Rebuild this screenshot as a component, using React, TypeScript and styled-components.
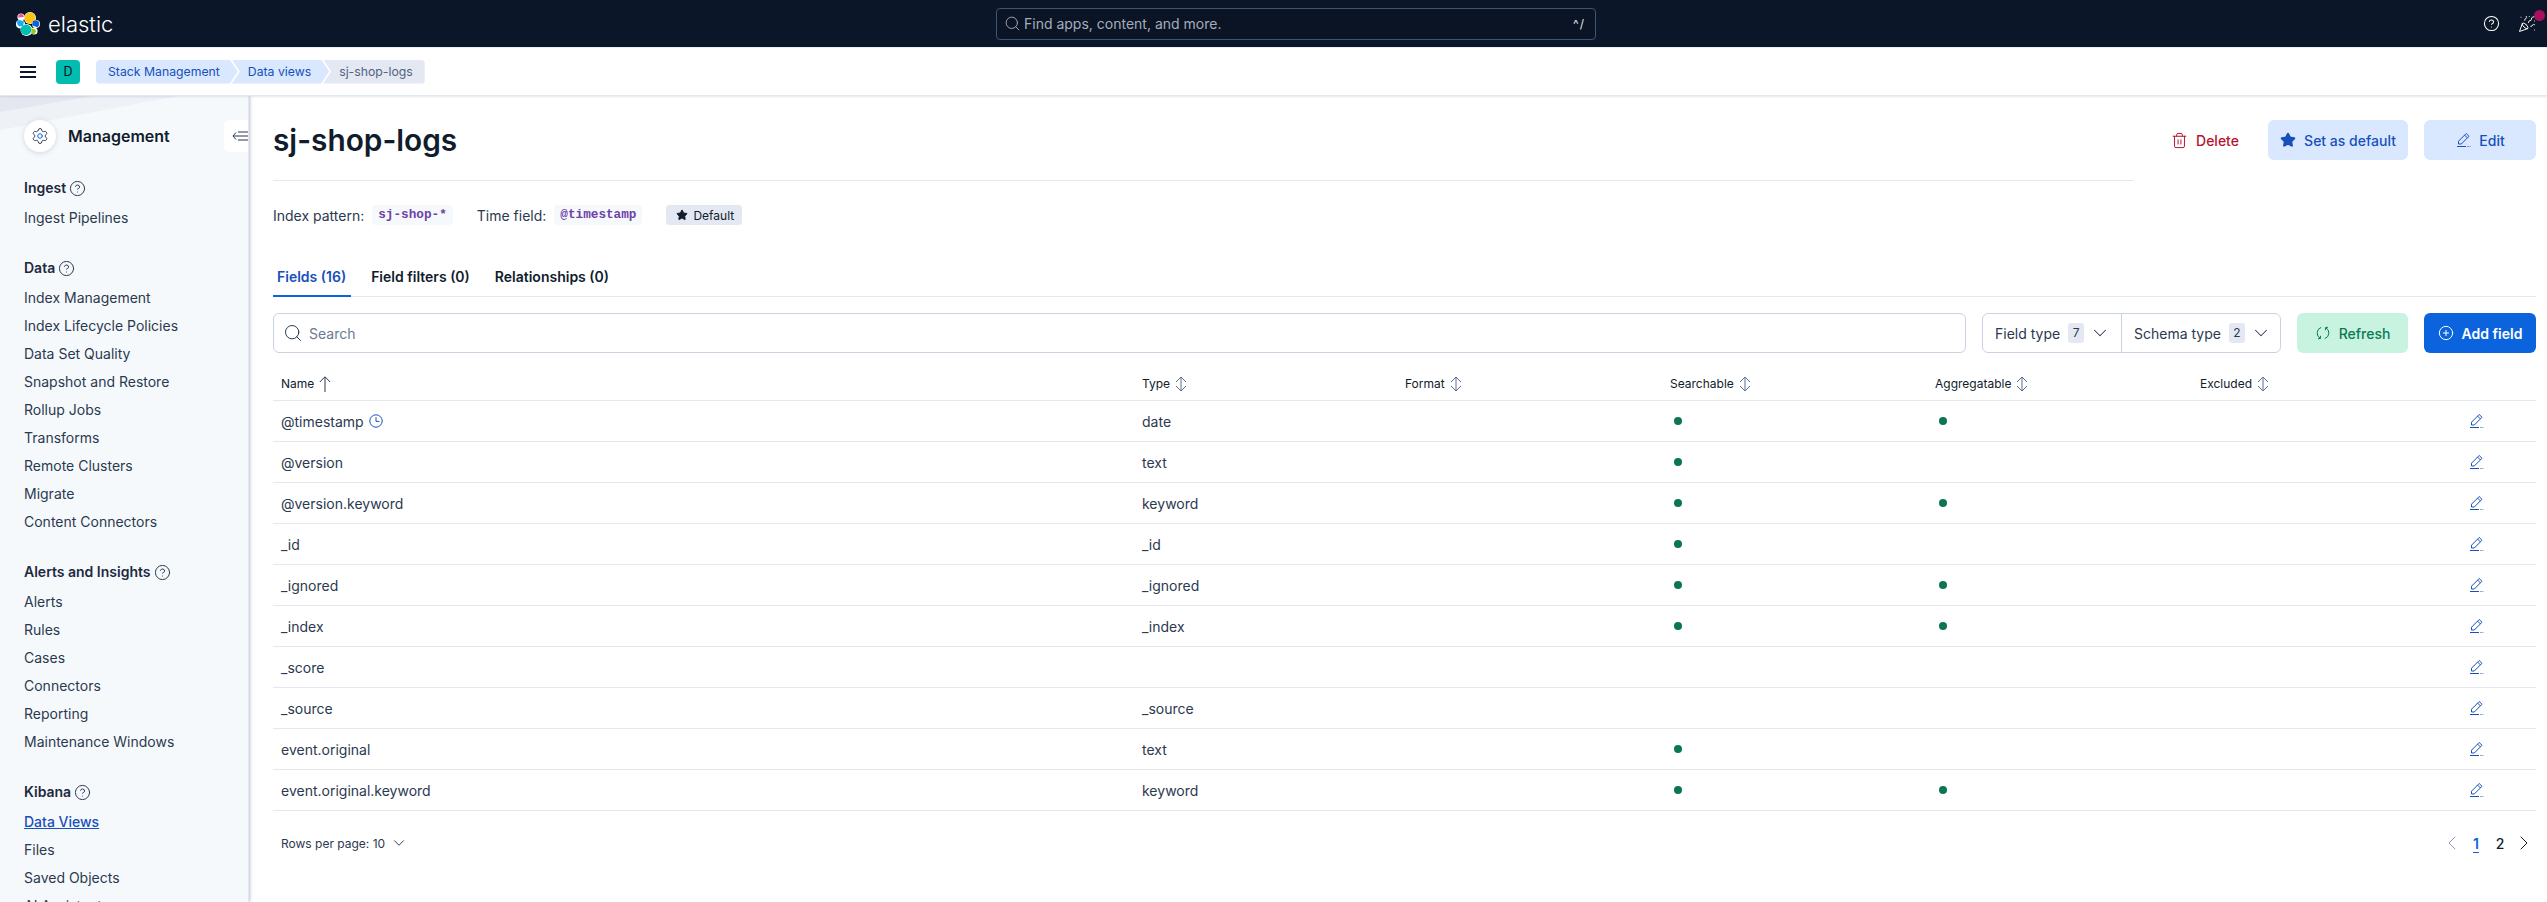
import React from "react";
import styled, { createGlobalStyle } from "styled-components";
import { ChevronDown, ChevronLeft, ChevronRight, CircleHelp, CirclePlus, PartyPopper, Search, Settings, Star, Trash2 } from "lucide-react";

const Global = createGlobalStyle`
  html, body { margin: 0; padding: 0; height: 902px; overflow: hidden; background: #fff; }
  body { font-family: Inter, "Noto Sans", sans-serif; font-size: 14px; color: #2b394f; }
  * { box-sizing: border-box; }
`;

const Page = styled.div`height: 902px; display: flex; flex-direction: column; overflow: hidden;`;
const TopBar = styled.header`
  height: 48px; flex: none; background: #0b1628; border-bottom: 1px solid #eef1f7;
  display: grid; grid-template-columns: 996px 600px 1fr; align-items: center;
`;
const Brand = styled.div`display: flex; align-items: center; gap: 8px; padding-left: 16px;`;
const BrandName = styled.span`color: #fff; font-size: 22px; font-weight: 300; line-height: 24px;`;
const GlobalSearch = styled.div`
  height: 32px; border: 1px solid #3f5373; border-radius: 4px; background: #0a1424;
  display: flex; align-items: center; padding: 0 10px 0 7px; gap: 3px; color: #a3adbc; font-size: 14px;
`;
const Grow = styled.span`flex: 1;`;
const Kbd = styled.span`color: #dfe5ef; font-size: 12px; letter-spacing: 1px;`;
const TopIcons = styled.div`display: flex; justify-content: flex-end; align-items: center; gap: 18px; padding-right: 11px; color: #fff;`;
const NewsWrap = styled.span`position: relative; display: flex;`;
const NewsDot = styled.span`position: absolute; top: -5px; right: -9px; width: 11px; height: 11px; border-radius: 50%; background: #a5115f;`;

const SubBar = styled.div`
  height: 48px; flex: none; display: flex; align-items: center; background: #fff; position: relative; z-index: 3;
  padding-left: 20px; border-bottom: 1px solid #e3e8f2; box-shadow: 0 1px 2px rgba(120,135,170,.2);
`;
const Burger = styled.div`
  width: 16px; height: 12px; margin-right: 20px;
  border-top: 2px solid #0b1628; border-bottom: 2px solid #0b1628; position: relative;
  &::after { content: ""; position: absolute; left: 0; right: 0; top: 3px; height: 2px; background: #0b1628; }
`;
const Avatar = styled.div`
  width: 24px; height: 24px; border-radius: 4px; background: #02bcb0; color: #07101f; font-size: 12.5px;
  display: flex; align-items: center; justify-content: center; margin-right: 16px;
`;
const Crumbs = styled.nav`display: flex;`;
const Crumb = styled.a<{ $kind: "first" | "mid" | "last" }>`
  height: 24px; display: flex; align-items: center; font-size: 12.25px; line-height: 24px;
  color: ${p => (p.$kind === "last" ? "#516381" : "#1750ba")};
  background: ${p => (p.$kind === "last" ? "#e3e8f2" : "#d9e8ff")};
  padding: ${p => (p.$kind === "first" ? "0 18px 0 12px" : p.$kind === "mid" ? "0 18px 0 16px" : "0 12px 0 16px")};
  margin-left: ${p => (p.$kind === "first" ? "0" : "-6px")};
  border-radius: ${p => (p.$kind === "first" ? "4px 0 0 4px" : p.$kind === "last" ? "0 4px 4px 0" : "0")};
  clip-path: ${p =>
    p.$kind === "first"
      ? "polygon(0 0, calc(100% - 8px) 0, 100% 50%, calc(100% - 8px) 100%, 0 100%)"
      : p.$kind === "mid"
        ? "polygon(0 0, calc(100% - 8px) 0, 100% 50%, calc(100% - 8px) 100%, 0 100%, 8px 50%)"
        : "polygon(0 0, 100% 0, 100% 100%, 0 100%, 8px 50%)"};
`;

const Body = styled.div`flex: 1; display: flex; min-height: 0;`;
const Side = styled.aside`
  width: 249px; flex: none; background: #f6f9fc; padding: 24px 0 0 24px; position: relative; overflow: hidden;
  border-right: 1px solid #e3e8f2; box-shadow: 1px 0 3px rgba(120,135,170,.5); z-index: 2;
  &::before { content: ""; position: absolute; left: 0; top: 0; width: 178px; height: 34px; background: #eef1f6; clip-path: polygon(0 0, 100% 0, 0 100%); }
  &::after { content: ""; position: absolute; left: 0; top: 0; width: 93px; height: 16px; background: #e4e7f0; clip-path: polygon(0 0, 100% 0, 0 100%); }
`;
const SideHead = styled.div`height: 32px; display: flex; align-items: center; gap: 12px; margin-bottom: 26px; position: relative; z-index: 1;`;
const GearCircle = styled.span`
  width: 32px; height: 32px; border-radius: 50%; background: #fff; display: flex; align-items: center; justify-content: center;
  box-shadow: 0 1px 5px rgba(120,135,170,.3); color: #2b394f;
  & circle { stroke: #0b64dd; }
`;
const SideTitle = styled.div`font-size: 16px; font-weight: 600; color: #111c2c;`;
const Collapse = styled.span`
  position: absolute; right: 0; top: 0; width: 24px; height: 32px; background: #fff; border-radius: 6px 0 0 6px;
  display: flex; align-items: center; justify-content: flex-start; padding-left: 8px; color: #2b394f;
`;
const Group = styled.section`margin-bottom: 26px;`;
const GroupTitle = styled.div`height: 20px; margin-bottom: 6px; display: flex; align-items: center; gap: 3px; font-weight: 600; color: #1d2a3e; line-height: 20px;`;
const SideItem = styled.a<{ $active?: boolean }>`
  display: block; height: 28px; line-height: 28px;
  color: ${p => (p.$active ? "#1750ba" : "#2b394f")};
  font-weight: ${p => (p.$active ? 500 : 400)};
  text-decoration: ${p => (p.$active ? "underline" : "none")};
`;

const Main = styled.main`flex: 1; min-width: 0; padding: 0 11px 0 24px; background: #fff;`;
const Header = styled.div`display: flex; align-items: flex-start;`;
const TitleBlock = styled.div`flex: 1; margin-right: 24px; padding: 24px 0 20px; border-bottom: 1px solid #e3e8f2;`;
const Title = styled.h1`margin: 0; font-size: 29.8px; line-height: 40px; font-weight: 600; color: #111c2c;`;
const Actions = styled.div`display: flex; gap: 16px; padding-top: 24px;`;
const Btn = styled.button<{ $tone: "plain" | "soft" | "green" | "solid"; $w: number }>`
  height: 40px; width: ${p => p.$w}px; border: 0; border-radius: 6px; display: flex; align-items: center; justify-content: center; gap: 8px;
  font: 500 14px Inter, sans-serif; padding: 0; flex: none;
  background: ${p => ({ plain: "transparent", soft: "#d9e8ff", green: "#c8f3e1", solid: "#0b64dd" })[p.$tone]};
  color: ${p => ({ plain: "#b4152e", soft: "#1750ba", green: "#0b7a53", solid: "#fff" })[p.$tone]};
  font-weight: ${p => (p.$tone === "solid" ? 600 : 500)};
`;
const Info = styled.div`display: flex; align-items: center; height: 20px; margin-top: 24px; color: #2b394f;`;
const Label = styled.span`margin-right: 8px;`;
const Code = styled.code`
  height: 20px; padding: 0 6px; border-radius: 4px; background: #f6f9fc; color: #6f3fa8; margin-right: 24px;
  font: 700 12.7px/20px "Liberation Mono", monospace;
`;
const DefaultBadge = styled.span`
  height: 20px; padding: 0 8px 0 10px; border-radius: 3px; background: #e3e8f2; color: #111c2c; font-size: 12px;
  display: flex; align-items: center; gap: 5px;
`;
const Tabs = styled.div`display: flex; gap: 16px; height: 40px; margin-top: 32px; border-bottom: 1px solid #e3e8f2;`;
const Tab = styled.div<{ $on?: boolean }>`
  padding: 0 5px 0 4px; height: 40px; line-height: 39px; font-weight: 600; color: ${p => (p.$on ? "#1750ba" : "#111c2c")};
  border-bottom: 2px solid ${p => (p.$on ? "#0b64dd" : "transparent")};
`;
const Tools = styled.div`display: flex; gap: 16px; height: 40px; margin-top: 16px;`;
const SearchBox = styled.div`
  flex: 1; border: 1px solid #cad3e2; border-radius: 6px; display: flex; align-items: center; gap: 6px; padding-left: 9px; color: #6a7a93;
`;
const FilterGroup = styled.div`display: flex; width: 299px; border: 1px solid #cad3e2; border-radius: 6px;`;
const Filter = styled.div<{ $w: number; $line?: boolean }>`
  width: ${p => p.$w}px; display: flex; align-items: center; padding-left: 12px; color: #2b394f; white-space: nowrap;
  border-right: ${p => (p.$line ? "1px solid #cad3e2" : "0")};
`;
const Count = styled.span`
  width: 16px; height: 20px; border-radius: 3px; background: #e3e8f2; font-size: 12px; line-height: 20px; text-align: center; margin: 0 5px 0 8px; color: #2b394f;
`;
const Columns = "861px 263px 265px 265px 265px 265px 1fr";
const HeadRow = styled.div`
  display: grid; grid-template-columns: ${Columns}; height: 48px; border-bottom: 1px solid #e3e8f2; align-items: center; padding-top: 14px;
`;
const HeadCell = styled.div`display: flex; align-items: center; gap: 5px; padding-left: 8px; font-size: 12px; font-weight: 400; color: #111c2c;`;
const Row = styled.div`
  display: grid; grid-template-columns: ${Columns}; height: 41px; border-bottom: 1px solid #e3e8f2; align-items: center;
`;
const Cell = styled.div`display: flex; align-items: center; gap: 5px; padding-left: 8px; color: #2b394f;`;
const Dot = styled.span`width: 8px; height: 8px; border-radius: 50%; background: #0a7750; margin-left: 4px;`;
const EditCell = styled.div`padding-left: 11px; display: flex; color: #1750ba;`;
const Foot = styled.div`display: flex; justify-content: space-between; align-items: center; margin-top: 20px; height: 24px;`;
const RowsPer = styled.div`display: flex; align-items: center; gap: 5px; padding-left: 8px; font-size: 12px; color: #2b394f;`;
const Pager = styled.div`display: flex;`;
const PageCell = styled.span<{ $state?: "on" | "off" }>`
  width: 24px; height: 24px; display: flex; align-items: center; justify-content: center; font-size: 14px;
  color: ${p => (p.$state === "on" ? "#0b64dd" : p.$state === "off" ? "#8ea0bd" : "#111c2c")};
  font-weight: ${p => (p.$state === "on" ? 600 : 500)};
  text-decoration: ${p => (p.$state === "on" ? "underline" : "none")};
  text-underline-offset: 3px;
`;

const Logo = () => (
  <svg width="24" height="24" viewBox="0 0 24 24" aria-hidden>
    <circle cx="14" cy="6" r="6" fill="#fff" /><circle cx="5" cy="5" r="3.6" fill="#fff" /><circle cx="4.5" cy="12" r="4.6" fill="#fff" />
    <circle cx="10.5" cy="18" r="6" fill="#fff" /><circle cx="20" cy="12" r="4" fill="#fff" /><circle cx="18" cy="19" r="3.6" fill="#fff" />
    <circle cx="14" cy="6" r="5.5" fill="#fec514" /><path d="M2.2 5.6a2.9 2.9 0 0 1 5-2.6l.7 2z" fill="#f04e98" />
    <path d="M1 11a3.4 3.4 0 0 1 2-3.2l5 1.6-1 4.4-3.4.6A3.6 3.6 0 0 1 1 11z" fill="#1ba9f5" />
    <circle cx="10" cy="17.8" r="5.4" fill="#00bfb3" /><path d="M17 9l2.5-.8a3.8 3.8 0 0 1 3.8 3.8 3.5 3.5 0 0 1-2 3.2l-5.3-2z" fill="#0b64dd" />
    <path d="M15.5 16.2l4 1.4a3 3 0 0 1-4.2 4z" fill="#93c90e" />
  </svg>
);
const CollapseIcon = () => (
  <svg width="16" height="16" viewBox="0 0 16 16" fill="none" stroke="currentColor" aria-hidden>
    <path d="M4 4.5 1 8l3 3.5M1 8h15M6 4h10M6 12h10" strokeWidth="1" />
  </svg>
);
const Pencil = () => (
  <svg width="16" height="16" viewBox="0 0 16 16" fill="none" stroke="currentColor" strokeWidth="1" aria-hidden>
    <path d="M11.2 1.5 14 4.3 6.3 12H3.5V9.2zM9.6 3.1l2.8 2.8" /><path d="M2 14.5h9M12.5 14.5h1M14.7 14.5h.6" />
  </svg>
);
const Sort = () => (
  <svg width="12" height="16" viewBox="0 0 12 16" fill="none" stroke="#5c6f8e" strokeWidth="1" aria-hidden>
    <path d="M1 6l5-5 5 5M1 10l5 5 5-5M6 1.5v13" />
  </svg>
);
const SortedUp = () => (
  <svg width="12" height="16" viewBox="0 0 12 16" fill="none" stroke="#2b394f" strokeWidth="1" aria-hidden>
    <path d="M.8 6 6 .8 11.2 6M6 1v15" />
  </svg>
);
const Refresh = () => (
  <svg width="16" height="16" viewBox="0 0 16 16" fill="none" stroke="currentColor" strokeWidth="1" aria-hidden>
    <path d="M6.2 2.4A6 6 0 0 0 5.4 13.4M9.8 13.6A6 6 0 0 0 10.6 2.6M10.4 5.2 10.6 2.6 13 2.2M5.6 10.8 5.4 13.4 3 13.8" />
  </svg>
);
const Clock = () => (
  <svg width="14" height="14" viewBox="0 0 14 14" fill="none" stroke="#1750ba" strokeWidth="1" aria-hidden>
    <circle cx="7" cy="7" r="6.2" /><path d="M7 3.2V7.4h3.4" />
  </svg>
);
const Help = () => <CircleHelp size={17} strokeWidth={1.4} color="#2b394f" />;

const groups = [
  { title: "Ingest", items: ["Ingest Pipelines"] },
  { title: "Data", items: ["Index Management", "Index Lifecycle Policies", "Data Set Quality", "Snapshot and Restore", "Rollup Jobs", "Transforms", "Remote Clusters", "Migrate", "Content Connectors"] },
  { title: "Alerts and Insights", items: ["Alerts", "Rules", "Cases", "Connectors", "Reporting", "Maintenance Windows"] },
  { title: "Kibana", items: ["Data Views", "Files", "Saved Objects", "AI Assistants"] },
];
const columns = ["Name", "Type", "Format", "Searchable", "Aggregatable", "Excluded"];
const rows: [string, string, boolean, boolean][] = [
  ["@timestamp", "date", true, true],
  ["@version", "text", true, false],
  ["@version.keyword", "keyword", true, true],
  ["_id", "_id", true, false],
  ["_ignored", "_ignored", true, true],
  ["_index", "_index", true, true],
  ["_score", "", false, false],
  ["_source", "_source", false, false],
  ["event.original", "text", true, false],
  ["event.original.keyword", "keyword", true, true],
];

export default function App() {
  return (
    <Page>
      <Global />
      <TopBar>
        <Brand><Logo /><BrandName>elastic</BrandName></Brand>
        <GlobalSearch>
          <Search size={17} strokeWidth={1.3} />
          <span>Find apps, content, and more.</span>
          <Grow />
          <Kbd>^/</Kbd>
        </GlobalSearch>
        <TopIcons>
          <CircleHelp size={17} strokeWidth={1.5} />
          <NewsWrap><PartyPopper size={18} strokeWidth={1.3} /><NewsDot /></NewsWrap>
        </TopIcons>
      </TopBar>
      <SubBar>
        <Burger />
        <Avatar>D</Avatar>
        <Crumbs>
          <Crumb $kind="first">Stack Management</Crumb>
          <Crumb $kind="mid">Data views</Crumb>
          <Crumb $kind="last">sj-shop-logs</Crumb>
        </Crumbs>
      </SubBar>
      <Body>
        <Side>
          <SideHead>
            <GearCircle><Settings size={18} strokeWidth={1.3} /></GearCircle>
            <SideTitle>Management</SideTitle>
            <Collapse><CollapseIcon /></Collapse>
          </SideHead>
          {groups.map(g => (
            <Group key={g.title}>
              <GroupTitle>{g.title} <Help /></GroupTitle>
              {g.items.map(i => <SideItem key={i} $active={i === "Data Views"}>{i}</SideItem>)}
            </Group>
          ))}
        </Side>
        <Main>
          <Header>
            <TitleBlock><Title>sj-shop-logs</Title></TitleBlock>
            <Actions>
              <Btn $tone="plain" $w={94}><Trash2 size={17} strokeWidth={1.4} />Delete</Btn>
              <Btn $tone="soft" $w={140}><Star size={16} fill="currentColor" />Set as default</Btn>
              <Btn $tone="soft" $w={112}><Pencil />Edit</Btn>
            </Actions>
          </Header>
          <Info>
            <Label>Index pattern:</Label><Code>sj-shop-*</Code>
            <Label>Time field:</Label><Code>@timestamp</Code>
            <DefaultBadge><Star size={12} fill="currentColor" />Default</DefaultBadge>
          </Info>
          <Tabs>
            <Tab $on>Fields (16)</Tab>
            <Tab>Field filters (0)</Tab>
            <Tab>Relationships (0)</Tab>
          </Tabs>
          <Tools>
            <SearchBox><Search size={20} strokeWidth={1.2} color="#2b394f" />Search</SearchBox>
            <FilterGroup>
              <Filter $w={139} $line>Field type<Count>7</Count><ChevronDown size={22} strokeWidth={1.1} /></Filter>
              <Filter $w={158}>Schema type<Count>2</Count><ChevronDown size={22} strokeWidth={1.1} /></Filter>
            </FilterGroup>
            <Btn $tone="green" $w={111}><Refresh />Refresh</Btn>
            <Btn $tone="solid" $w={112}><CirclePlus size={16} strokeWidth={1.5} />Add field</Btn>
          </Tools>
          <HeadRow>
            {columns.map((c, i) => (
              <HeadCell key={c}>{c}{i === 0 ? <SortedUp /> : <Sort />}</HeadCell>
            ))}
          </HeadRow>
          {rows.map(([name, type, s, a]) => (
            <Row key={name}>
              <Cell>{name}{name === "@timestamp" && <Clock />}</Cell>
              <Cell>{type}</Cell>
              <Cell />
              <Cell>{s && <Dot />}</Cell>
              <Cell>{a && <Dot />}</Cell>
              <Cell />
              <EditCell><Pencil /></EditCell>
            </Row>
          ))}
          <Foot>
            <RowsPer>Rows per page: 10 <ChevronDown size={18} strokeWidth={1.3} /></RowsPer>
            <Pager>
              <PageCell $state="off"><ChevronLeft size={24} strokeWidth={1} /></PageCell>
              <PageCell $state="on">1</PageCell>
              <PageCell>2</PageCell>
              <PageCell><ChevronRight size={24} strokeWidth={1} /></PageCell>
            </Pager>
          </Foot>
        </Main>
      </Body>
    </Page>
  );
}
